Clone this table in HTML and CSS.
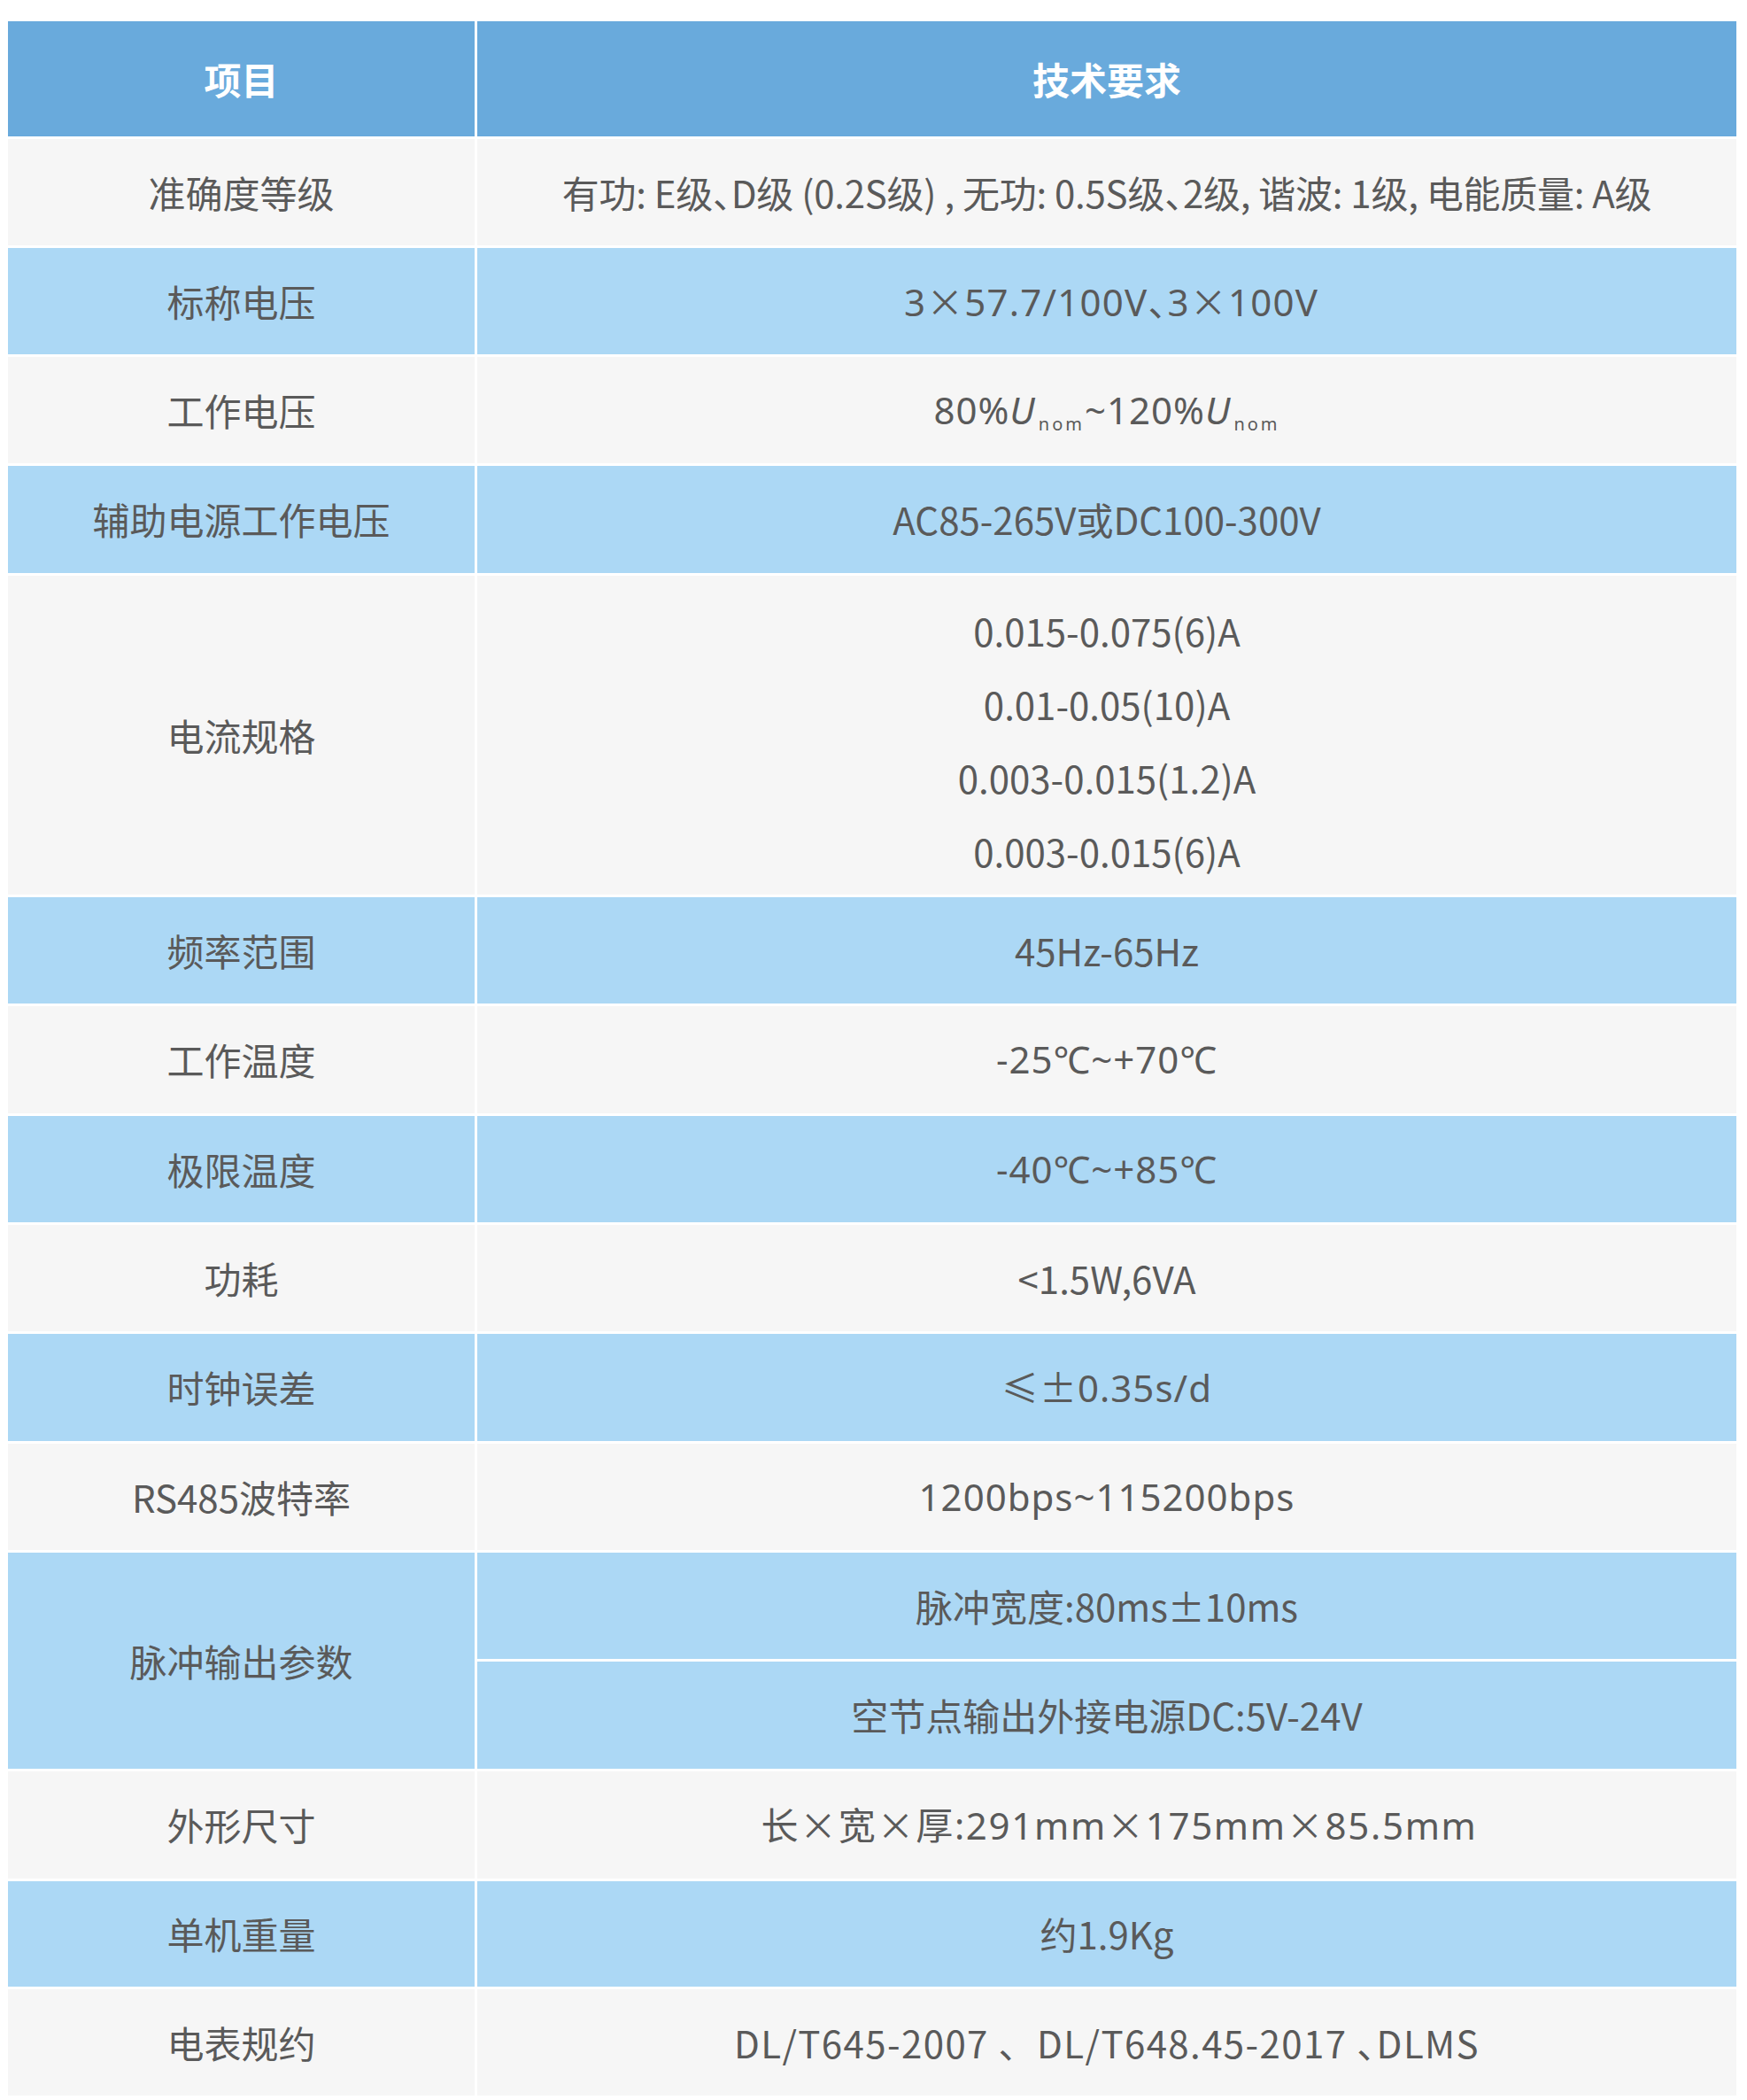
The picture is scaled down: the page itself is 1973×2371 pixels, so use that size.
FILE: index.html
```html
<!DOCTYPE html>
<html lang="zh-CN">
<head>
<meta charset="utf-8">
<title>技术参数</title>
<link rel="stylesheet" href="styles.css">
</head>
<body>
<div class="spec">
  <div class="cell head">项目</div>
  <div class="cell head">技术要求</div>

  <div class="cell gray">准确度等级</div>
  <div class="cell gray"><span class="halt grade">有功: E级、D级 (0.2S级) , 无功: 0.5S级、2级, 谐波: 1级, 电能质量: A级</span></div>

  <div class="cell blue">标称电压</div>
  <div class="cell blue"><span class="wide volt">3<span class="cjk">×</span>57.7/100V<span class="cjk halt">、</span>3<span class="cjk">×</span>100V</span></div>

  <div class="cell gray">工作电压</div>
  <div class="cell gray"><span class="wide">80%<i class="u">U</i><sub class="nom">nom</sub>~120%<i class="u">U</i><sub class="nom">nom</sub></span></div>

  <div class="cell blue">辅助电源工作电压</div>
  <div class="cell blue">AC85-265V或DC100-300V</div>

  <div class="cell gray">电流规格</div>
  <div class="cell gray lines">
    <p>0.015-0.075(6)A</p>
    <p>0.01-0.05(10)A</p>
    <p>0.003-0.015(1.2)A</p>
    <p>0.003-0.015(6)A</p>
  </div>

  <div class="cell blue">频率范围</div>
  <div class="cell blue">45Hz-65Hz</div>

  <div class="cell gray">工作温度</div>
  <div class="cell gray"><span class="wide">-25℃~+70℃</span></div>

  <div class="cell blue">极限温度</div>
  <div class="cell blue"><span class="wide">-40℃~+85℃</span></div>

  <div class="cell gray">功耗</div>
  <div class="cell gray">&lt;1.5W,6VA</div>

  <div class="cell blue">时钟误差</div>
  <div class="cell blue"><span class="wide">≤<span class="cjk">±</span>0.35s/d</span></div>

  <div class="cell gray">RS485波特率</div>
  <div class="cell gray"><span class="wide">1200bps~115200bps</span></div>

  <div class="cell blue span2">脉冲输出参数</div>
  <div class="cell blue">脉冲宽度:80ms±10ms</div>
  <div class="cell blue">空节点输出外接电源DC:5V-24V</div>

  <div class="cell gray">外形尺寸</div>
  <div class="cell gray"><span class="wide dims">长<span class="cjk">×</span>宽<span class="cjk">×</span>厚:291mm<span class="cjk">×</span>175mm<span class="cjk">×</span>85.5mm</span></div>

  <div class="cell blue">单机重量</div>
  <div class="cell blue">约1.9Kg</div>

  <div class="cell gray">电表规约</div>
  <div class="cell gray"><span class="spaced">DL/T645-2007 、DL/T648.45-2017 <span class="halt">、</span>DLMS</span></div>
</div>
</body>
</html>
```
FILE: styles.css
```css
html, body {
  margin: 0;
  padding: 0;
  background: #ffffff;
}

body {
  padding-top: 24px;
  font-family: "Noto Sans CJK SC", "Noto Sans", sans-serif;
  font-size: 42px;
  color: #5a5a5a;
}

.spec {
  display: grid;
  width: 1952px;
  margin-left: 9px;
  grid-template-columns: 527px 1422px;
  grid-template-rows: 130px 120px 120px 120px 121px 360px 120px 121px 120px 120px 121px 120px 120px 121px 121px 119px 120px;
  gap: 3px;
}

.cell {
  display: flex;
  align-items: center;
  justify-content: center;
  text-align: center;
  line-height: 1.2;
  white-space: nowrap;
}

.head {
  background: #69aadc;
  color: #ffffff;
  font-weight: 700;
}

.gray {
  background: #f6f6f6;
}

.blue {
  background: #acd8f5;
}

.span2 {
  grid-row: span 2;
}

.wide {
  font-family: "Noto Sans", "Noto Sans CJK SC", sans-serif;
  letter-spacing: 1px;
}

.wide.volt {
  letter-spacing: 1.2px;
  margin-left: 10px;
}

.wide.dims {
  letter-spacing: 1.7px;
  margin-left: 28px;
}

.grade {
  letter-spacing: -0.25px;
}

.cjk {
  font-family: "Noto Sans CJK SC", sans-serif;
}

.halt {
  font-feature-settings: "halt" 1;
}

.spaced {
  letter-spacing: 1.4px;
}

.u {
  font-style: italic;
}

.nom {
  font-size: 20px;
  letter-spacing: 3px;
  vertical-align: -7px;
  margin-left: 3px;
  line-height: 1;
}

.lines {
  flex-direction: column;
  padding-top: 12px;
  box-sizing: border-box;
}

.lines p {
  margin: 0;
  line-height: 83px;
}
```
